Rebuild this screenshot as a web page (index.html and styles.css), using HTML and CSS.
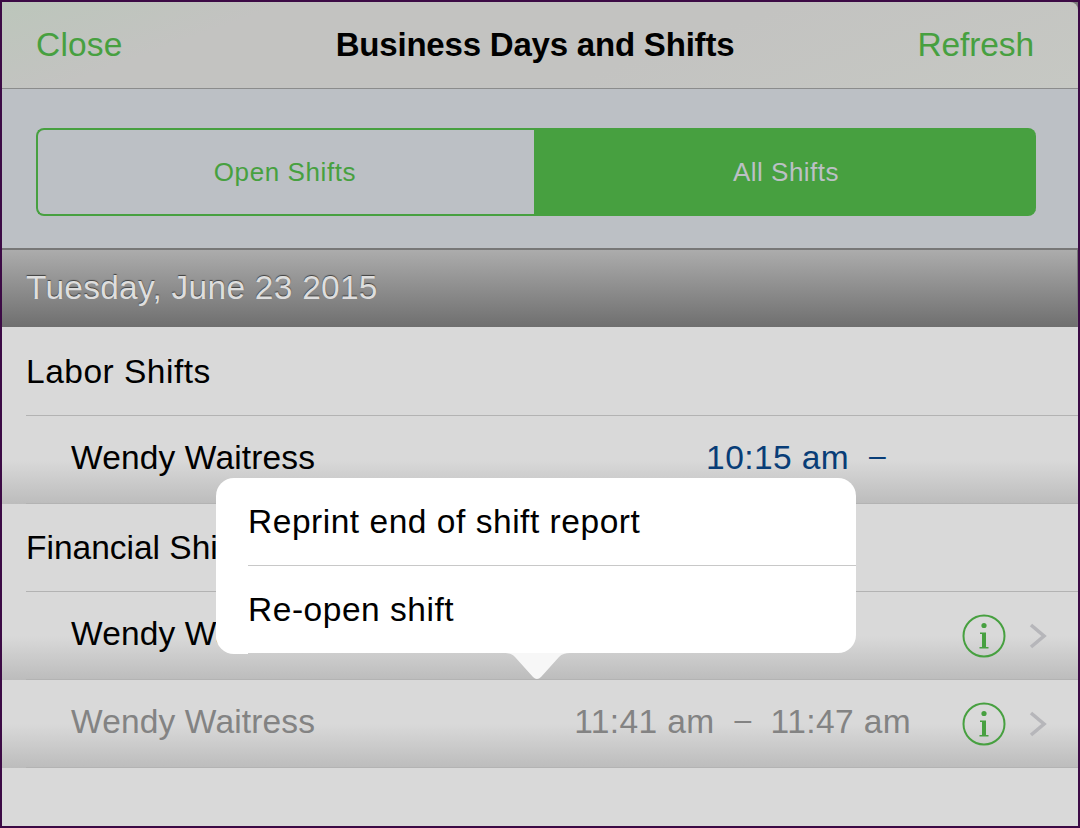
FILE: index.html
```html
<!DOCTYPE html>
<html>
<head>
  <meta charset="UTF-8"/>
  <title>Business Days and Shifts</title>
  <link rel="stylesheet" href="styles.css">
</head>
<body>
<div class="frame">
  <div class="navbar">
    <a class="nav-btn">Close</a>
    <h1 class="nav-title">Business Days and Shifts</h1>
    <a class="nav-btn right">Refresh</a>
  </div>

  <div class="filter">
    <div class="segments">
      <div class="segment">Open Shifts</div>
      <div class="segment on">All Shifts</div>
    </div>
  </div>

  <div class="date-band">Tuesday, June 23 2015</div>

  <div class="list">
    <div class="row head"><div class="row-in">Labor Shifts</div></div>

    <div class="row shift">
      <div class="row-in">
        <span class="name">Wendy Waitress</span>
        <span class="times open"><span class="blue">10:15 am</span><span class="blue dash">–</span></span>
      </div>
    </div>

    <div class="row head tight"><div class="row-in">Financial Shifts</div></div>

    <div class="row shift">
      <div class="row-in">
        <span class="name">Wendy Waitress</span>
        <span class="times"></span>
        <svg class="info" viewBox="0 0 44 44"><circle cx="22" cy="22" r="20.5" fill="none" stroke="#47a040" stroke-width="2"/><circle cx="22" cy="11.5" r="2.6" fill="#47a040"/><path d="M18 18.5h6v14.5h2.5v1.4h-9v-1.4H20V20h-2z" fill="#47a040"/></svg>
        <svg class="chev" viewBox="0 0 18 26"><path d="M2 2l13 11L2 24" fill="none" stroke="#b6b6ba" stroke-width="3.6"/></svg>
      </div>
    </div>

    <div class="row shift faded">
      <div class="row-in">
        <span class="name">Wendy Waitress</span>
        <span class="times"><span>11:41 am</span><span class="dash">–</span><span>11:47 am</span></span>
        <svg class="info" viewBox="0 0 44 44"><circle cx="22" cy="22" r="20.5" fill="none" stroke="#47a040" stroke-width="2"/><circle cx="22" cy="11.5" r="2.6" fill="#47a040"/><path d="M18 18.5h6v14.5h2.5v1.4h-9v-1.4H20V20h-2z" fill="#47a040"/></svg>
        <svg class="chev" viewBox="0 0 18 26"><path d="M2 2l13 11L2 24" fill="none" stroke="#b6b6ba" stroke-width="3.6"/></svg>
      </div>
    </div>
  </div>

  <!-- popover sits over the list -->
  <div class="popover">
    <div class="pop-item">Reprint end of shift report</div>
    <div class="pop-item">Re-open shift</div>
    <svg class="pop-arrow" viewBox="0 0 66 27"><path d="M0 0C5 0 8 1 11 4L29 24Q33 28 37 24L55 4C58 1 61 0 66 0z" fill="#f7f7f7"/></svg>
  </div>
</div>
</body>
</html>
```

FILE: styles.css
```css
* {box-sizing: border-box}
html, body {margin: 0; padding: 0; background: #3c0a45}
body {font-family: "Liberation Sans", Arial, sans-serif; color: #000}

.frame {position: relative; width: 1080px; height: 828px; border: 2px solid #3c0a45; background: #7a7a7a; display: flex; flex-direction: column; overflow: hidden}

.navbar {height: 87px; flex: none; display: flex; align-items: center; padding: 0 44px 0 34px; border-bottom: 1px solid #8b8c8c; border-top-right-radius: 8px; background: linear-gradient(160deg, #bcc6bb 0, #c3c3c1 22%, #c3c3c1 60%, #c6c8c3 100%)}
.nav-btn {flex: 1; font-size: 33.5px; color: #47a040; letter-spacing: 0.2px}
.nav-btn.right {text-align: right; letter-spacing: -0.1px}
.nav-title {margin: 0; font-size: 33px; font-weight: bold; letter-spacing: -0.2px}

.filter {height: 161px; flex: none; padding: 39px 42px 0 34px; background: #bcc0c5; border-bottom: 2px solid #777}
.segments {display: flex; height: 88px}
.segment {flex: 1; display: flex; align-items: center; justify-content: center; font-size: 26px; letter-spacing: 0.6px; padding-right: 2px; color: #47a040; border: 2px solid #47a040; border-right: 0; border-radius: 8px 0 0 8px}
.segment.on {color: #bcc0c5; background: #47a040; border-radius: 0 8px 8px 0; flex: 0 0 502px; letter-spacing: 0.5px; padding-right: 0}

.date-band {height: 77px; flex: none; padding: 0 0 2px 24px; display: flex; align-items: center; font-size: 33.5px; letter-spacing: 0.25px; color: #dedede; text-shadow: 0 -1px 1px #404040; background: linear-gradient(#acacac, #6f6f6f); border-right: 1px solid #777}

.list {padding-top: 1px; flex: 1; background: #d9d9d9}
.row {height: 88px; padding-left: 24px; font-size: 33.5px}
.row-in {height: 88px; display: flex; align-items: center; border-bottom: 1px solid #b3b3b3}
.row.head .row-in {letter-spacing: 0.5px}
.row.head.tight .row-in {letter-spacing: 0}
.row.shift {background: linear-gradient(#d9d9d9 0, #d9d9d9 50%, #bcbcbc 100%)}
.row.shift .row-in {padding-left: 45px; padding-bottom: 4px}
.name {letter-spacing: 0.15px}
.times {margin-left: auto; display: flex; gap: 20px; padding-right: 51px; letter-spacing: 0.4px}
.times.open {padding-right: 193px}
.dash {font-size: 30px; width: 16px; text-align: center}
.blue {color: #083d77}
.faded .name, .faded .times {color: #838383}
.info {width: 44px; height: 44px; flex: none; margin-top: 4px}
.chev {width: 18px; height: 26px; flex: none; margin: 4px 31px 0 23px}

.popover {position: absolute; left: 214px; top: 476px; width: 640px; height: 175px; background: #fff; border-radius: 18px; padding-left: 32px; font-size: 33.5px; letter-spacing: 0.53px}
.popover::after {content: ""; position: absolute; left: 0; bottom: -1px; width: 32px; height: 18px; background: #fff; border-radius: 0 0 0 18px}
.pop-item {height: 88px; display: flex; align-items: center}
.pop-item:first-child {border-bottom: 1px solid #c8c8c8}
.pop-arrow {position: absolute; left: 288px; top: 175px; width: 66px; height: 27px; display: block}
```
